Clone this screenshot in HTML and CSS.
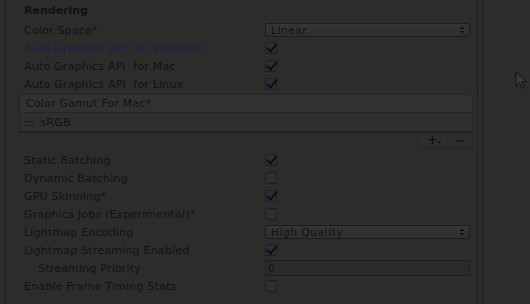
FILE: index.html
```html
<!DOCTYPE html>
<html lang="en">
<head>
    <meta charset="UTF-8">
    <title>Player Settings - Rendering</title>
    <link rel="stylesheet" href="styles.css">
</head>
<body>
    <div class="window">
        <div class="inspector">
            <div class="section-title">Rendering</div>

            <div class="row">
                <span class="label">Color Space*</span>
                <div class="dropdown"><span>Linear</span><span class="arrows"></span></div>
            </div>
            <div class="row">
                <span class="label blue">Auto Graphics API&nbsp; for Windows</span>
                <span class="check on"></span>
            </div>
            <div class="row">
                <span class="label">Auto Graphics API&nbsp; for Mac</span>
                <span class="check on"></span>
            </div>
            <div class="row">
                <span class="label">Auto Graphics API&nbsp; for Linux</span>
                <span class="check on"></span>
            </div>

            <!-- reorderable list -->
            <div class="list">
                <div class="list-head">Color Gamut For Mac*</div>
                <div class="list-item"><span class="handle"></span>sRGB</div>
                <div class="list-foot">
                    <span class="plus">+<span class="tiny">&#9662;</span></span>
                    <span class="minus"></span>
                </div>
            </div>

            <div class="row">
                <span class="label">Static Batching</span>
                <span class="check on"></span>
            </div>
            <div class="row">
                <span class="label">Dynamic Batching</span>
                <span class="check"></span>
            </div>
            <div class="row">
                <span class="label">GPU Skinning*</span>
                <span class="check on"></span>
            </div>
            <div class="row">
                <span class="label">Graphics Jobs (Experimental)*</span>
                <span class="check"></span>
            </div>
            <div class="row">
                <span class="label">Lightmap Encoding</span>
                <div class="dropdown"><span>High Quality</span><span class="arrows"></span></div>
            </div>
            <div class="row">
                <span class="label">Lightmap Streaming Enabled</span>
                <span class="check on"></span>
            </div>
            <div class="row">
                <span class="label indent">Streaming Priority</span>
                <div class="field">0</div>
            </div>
            <div class="row">
                <span class="label">Enable Frame Timing Stats</span>
                <span class="check"></span>
            </div>
        </div>
        <div class="gutter"></div>
        <div class="scene">
            <svg class="cursor" width="14" height="20" viewBox="0 0 14 20">
                <path d="M1 1 L1 15 L4.5 11.5 L7 17.5 L9.2 16.6 L6.8 10.8 L11.5 10.8 Z" fill="#3a3a3a" stroke="#141414" stroke-width="1"/>
            </svg>
        </div>
    </div>
</body>
</html>
```

FILE: styles.css
```css
body {
    margin: 0;
    background-color: #2c2c2b;
    font-family: "DejaVu Sans", sans-serif;
    font-size: 11px;
    color: #131313;
}
.window {
    display: flex;
    height: 304px;
    overflow: hidden;
}
.inspector {
    margin-left: 5px;
    width: 453px;
    padding-left: 13px;
    padding-right: 5px;
    border-left: 1px solid #222221;
    border-right: 1px solid #1f1f1f;
}
.gutter {
    width: 4px;
    border-right: 1px solid #1f1f1f;
}
.scene {
    flex: 1;
    position: relative;
}
.cursor {
    position: absolute;
    left: 32px;
    top: 71px;
}
.section-title {
    height: 21px;
    line-height: 21px;
    padding-left: 5px;
    font-weight: bold;
}
.row {
    display: flex;
    align-items: center;
    height: 18px;
    padding-left: 5px;
}
.label {
    width: 241px;
    flex: none;
    white-space: nowrap;
    letter-spacing: 0.2px;
}
.label.blue {
    color: #1a224c;
}
.label.indent {
    padding-left: 14px;
    width: 227px;
}
.dropdown {
    display: flex;
    justify-content: space-between;
    align-items: center;
    box-sizing: border-box;
    width: 205px;
    height: 14px;
    padding: 0 5px 0 5px;
    border: 1px solid #1d1d1d;
    border-radius: 3px;
    background: linear-gradient(#353534, #2f2f2e);
    font-size: 10.5px;
    letter-spacing: 0.6px;
}
.arrows {
    width: 4px;
    height: 8px;
    background:
        linear-gradient(to bottom right, transparent 50%, #121212 50%) 0 0 / 2px 3px no-repeat,
        linear-gradient(to bottom left, transparent 50%, #121212 50%) 2px 0 / 2px 3px no-repeat,
        linear-gradient(to top right, transparent 50%, #121212 50%) 0 5px / 2px 3px no-repeat,
        linear-gradient(to top left, transparent 50%, #121212 50%) 2px 5px / 2px 3px no-repeat;
}
.check {
    position: relative;
    box-sizing: border-box;
    width: 12px;
    height: 12px;
    border: 1px solid #1f1f1f;
    border-radius: 2px;
    background-color: #2f2f2f;
}
.check.on {
    background-color: #2a2d38;
}
.check.on::after {
    content: "";
    position: absolute;
    left: 3px;
    top: -2px;
    width: 4px;
    height: 9px;
    border-right: 2px solid #0f0f10;
    border-bottom: 2px solid #0f0f10;
    transform: rotate(40deg);
}
.field {
    box-sizing: border-box;
    width: 205px;
    height: 16px;
    line-height: 14px;
    padding-left: 2px;
    border: 1px solid #1f1f1f;
    background-color: #2a2a29;
    font-size: 10.5px;
}
.list {
    margin: 1px 0 2px 0;
    width: 454px;
}
.list-head {
    box-sizing: border-box;
    height: 19px;
    line-height: 18px;
    padding-left: 6px;
    border: 1px solid #262625;
    border-radius: 3px 3px 0 0;
    background-color: #313130;
    letter-spacing: 0.2px;
}
.list-item {
    box-sizing: border-box;
    display: flex;
    align-items: center;
    height: 20px;
    padding-left: 4px;
    border: 1px solid #262625;
    border-top: none;
    border-bottom: 2px solid #222221;
    border-radius: 0 0 0 3px;
    background-color: #2f2f2e;
    letter-spacing: 0.4px;
}
.handle {
    width: 10px;
    height: 3px;
    margin-right: 6px;
    margin-top: 3px;
    border-top: 1px solid #1c1c1c;
    border-bottom: 1px solid #1c1c1c;
}
.list-foot {
    display: flex;
    align-items: center;
    gap: 15px;
    box-sizing: border-box;
    width: 55px;
    height: 16px;
    margin-left: auto;
    padding-left: 8px;
    border: 1px solid #262625;
    border-top: none;
    border-radius: 0 0 3px 3px;
    background-color: #2d2d2c;
}
.plus {
    font-weight: bold;
    font-size: 13px;
    line-height: 13px;
    color: #0f0f0f;
}
.tiny {
    font-size: 6px;
}
.minus {
    width: 8px;
    height: 2px;
    background-color: #1f1f1f;
}
```
